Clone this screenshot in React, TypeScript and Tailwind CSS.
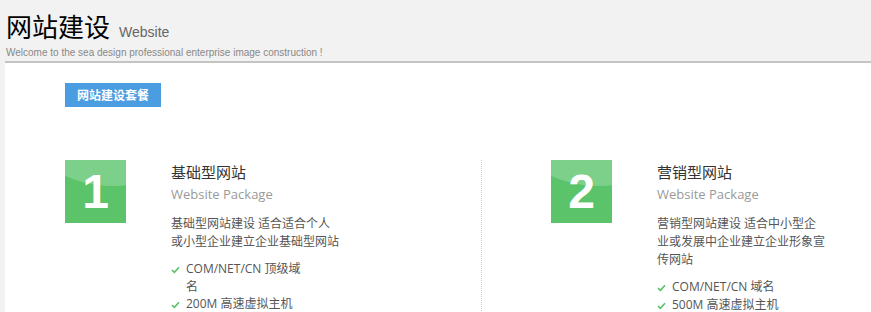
import React from "react";

const cjk = { fontFamily: '"Open Sans", "Noto Sans CJK SC", sans-serif' };

function GreenBox({ n }: { n: string }) {
  return (
    <div className="relative w-[61px] h-[63px] shrink-0 bg-[#5bc46b] overflow-hidden">
      <svg className="absolute inset-0" width="61" height="63" viewBox="0 0 61 63">
        <ellipse cx="48" cy="-40" rx="90" ry="66" fill="#7dd08a" />
      </svg>
      <div
        className="relative flex h-full items-center justify-center text-white font-bold text-[48px] leading-none"
        style={{ fontFamily: '"Liberation Sans", Arial, sans-serif' }}
      >
        {n}
      </div>
    </div>
  );
}

function Check() {
  return (
    <svg width="9" height="8" viewBox="0 0 9 8" className="shrink-0 mt-[6px]">
      <path d="M1 4.2 L3.4 6.4 L8 1.2" stroke="#5cbf6a" strokeWidth="1.6" fill="none" />
    </svg>
  );
}

function Card({ n, title, desc, items }: { n: string; title: string; desc: string; items: string[] }) {
  return (
    <div className="flex items-start">
      <GreenBox n={n} />
      <div className="ml-[45px] w-[169px]" style={cjk}>
        <div className="text-[15px] leading-[22px] text-[#333] mt-[1px]">{title}</div>
        <div className="text-[13px] leading-[20px] text-[#9a9a9a] mt-[1px]">Website Package</div>
        <div className="text-[12px] leading-[18px] text-[#555] mt-[11px]">{desc}</div>
        <ul className="mt-[9px] w-[135px]">
          {items.map((it) => (
            <li key={it} className="flex items-start gap-[6px] text-[12px] leading-[17.5px] text-[#555]">
              <Check />
              <span>{it}</span>
            </li>
          ))}
        </ul>
      </div>
    </div>
  );
}

export default function App() {
  return (
    <div className="w-full h-[312px] bg-[#f2f2f2] overflow-hidden">
      <div className="pl-[6px] pt-[10px] h-[61px]">
        <div className="flex items-baseline">
          <span
            className="text-[26px] leading-[32px] text-black"
            style={{ fontFamily: '"Noto Sans CJK SC", sans-serif' }}
          >
            网站建设
          </span>
          <span
            className="ml-[9px] text-[14px] text-[#666]"
            style={{ fontFamily: '"Liberation Sans", Arial, sans-serif' }}
          >
            Website
          </span>
        </div>
        <div
          className="mt-[4px] text-[10px] leading-[12px] text-[#888]"
          style={{ fontFamily: '"Liberation Sans", Arial, sans-serif' }}
        >
          Welcome to the sea design professional enterprise image construction !
        </div>
      </div>
      <div className="ml-[5px] bg-white border-t-2 border-[#c4c4c4] h-[260px]">
        <div className="pl-[60px] pt-[20px]">
          <div
            className="w-[96px] h-[24px] bg-[#4a9de0] text-white text-[12px] font-bold flex items-center justify-center"
            style={{ fontFamily: '"Noto Sans CJK SC", sans-serif' }}
          >
            网站建设套餐
          </div>
        </div>
        <div className="flex mt-[53px]">
          <div className="w-[476px] pl-[60px]">
            <Card
              n="1"
              title="基础型网站"
              desc="基础型网站建设 适合适合个人或小型企业建立企业基础型网站"
              items={["COM/NET/CN 顶级域名", "200M 高速虚拟主机"]}
            />
          </div>
          <div className="flex-1 border-l border-dotted border-[#cfcfcf] pl-[69px]">
            <Card
              n="2"
              title="营销型网站"
              desc="营销型网站建设 适合中小型企业或发展中企业建立企业形象宣传网站"
              items={["COM/NET/CN 域名", "500M 高速虚拟主机"]}
            />
          </div>
        </div>
      </div>
    </div>
  );
}
